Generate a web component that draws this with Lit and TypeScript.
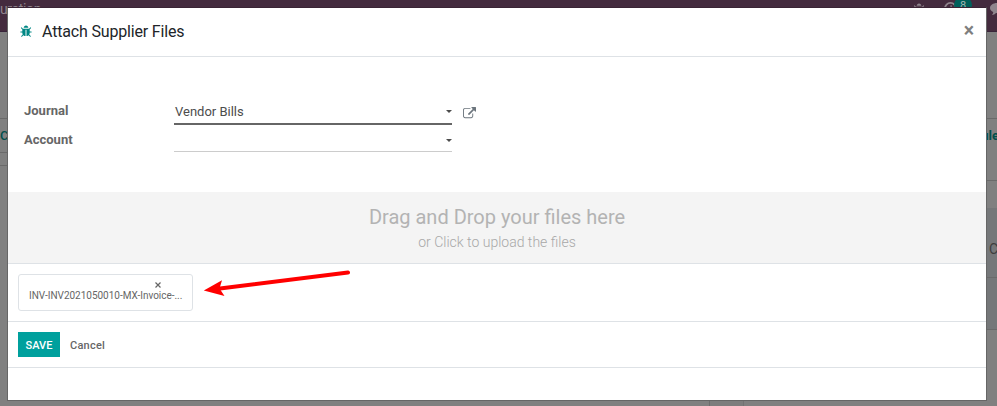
import { LitElement, html, css, svg } from "lit";
import { customElement, property } from "lit/decorators.js";

const BUG = "M1632 960q0 26-19 45t-45 19h-224q0 171-67 290l208 209q19 19 19 45t-19 45q-18 19-45 19t-45-19l-198-197q-5 5-15 13t-42 28.5-65 36.5-82 29-97 13v-896h-128v896q-51 0-101.5-13.5t-87-33-66-39-43.5-32.5l-15-14-183 207q-20 21-48 21-24 0-43-16-19-18-20.5-44.5t15.5-46.5l202-227q-58-114-58-274h-224q-26 0-45-19t-19-45 19-45 45-19h224v-294l-173-173q-19-19-19-45t19-45 45-19 45 19l173 173h844l173-173q19-19 45-19t45 19 19 45-19 45l-173 173v294h224q26 0 45 19t19 45zm-480-576h-640q0-133 93.5-226.5t226.5-93.5 226.5 93.5 93.5 226.5z";
const EXTERNAL = "M1408 928v320q0 119-84.5 203.5t-203.5 84.5h-832q-119 0-203.5-84.5t-84.5-203.5v-832q0-119 84.5-203.5t203.5-84.5h704q14 0 23 9t9 23v64q0 14-9 23t-23 9h-704q-66 0-113 47t-47 113v832q0 66 47 113t113 47h832q66 0 113-47t47-113v-320q0-14 9-23t23-9h64q14 0 23 9t9 23zm384-864v512q0 26-19 45t-45 19-45-19l-176-176-652 652q-10 10-23 10t-23-10l-114-114q-10-10-10-23t10-23l652-652-176-176q-19-19-19-45t19-45 45-19h512q26 0 45 19t19 45z";

const glyph = (path: string, box: string) =>
  html`<svg class="glyph" viewBox=${box}>${svg`<path d=${path} />`}</svg>`;

/** The page that stays dimmed under the dialog. */
@customElement("page-behind")
class PageBehind extends LitElement {
  static styles = css`
    :host { display: flex; flex-direction: column; height: 100%; background: #808080; font-size: 13px; }
    * { box-sizing: border-box; }
    .nav { height: 32px; flex: none; display: flex; align-items: flex-start; background: #442b3e; color: #8f858d; border-bottom: 1px solid #39243a; }
    .menu { margin: 1px 0 0; font-size: 14px; line-height: 16px; letter-spacing: -0.35px; }
    .tray { margin-left: auto; display: flex; align-items: flex-start; height: 31px; width: 84px; }
    .tray svg { flex: none; fill: #8f858d; }
    .bug { width: 12px; height: 13px; margin-top: 3px; }
    .clock { width: 13px; height: 13px; margin: 2px 0 0 19px; }
    .count { flex: none; width: 18px; height: 16px; margin: -3px 0 0 -3px; border-radius: 8px; background: #00605b; color: #a5b5b4; font-size: 11px; line-height: 18px; text-align: center; }
    .chat { width: 16px; height: 14px; margin: 2px 0 0 18px; }
    .control { height: 87px; flex: none; border-bottom: 1px solid #6a6a6a; }
    .body { flex: 1; display: flex; }
    .main { flex: none; width: 710px; border-right: 1px solid #6d6d6d; }
    .side { flex: 1; min-width: 0; display: flex; flex-direction: column; }
    .row { border-bottom: 1px solid #6a6a6a; }
    .status { height: 34px; padding-top: 9px; line-height: 16px; color: #004f4c; font-weight: 500; }
    .strip { height: 13px; }
    .schedule { height: 62px; padding-top: 9px; line-height: 16px; color: #004f4c; font-weight: 700; text-align: right; }
    .schedule span { margin-right: -2px; }
    .space { height: 27px; }
    .cell { background: #757779; color: #3d3d3d; }
    .first { height: 70px; padding: 33px 0 0 279px; line-height: 16px; font-size: 14px; }
    .second { height: 52px; }
    .foot { flex: 1; width: 34px; border-right: 1px solid #737373; background: #7d7d7d; }
  `;
  render() {
    return html`
      <div class="nav">
        <span class="menu">uration</span>
        <div class="tray">
          <svg class="bug" viewBox="0 0 1664 1792"><path d=${BUG} /></svg>
          <svg class="clock" viewBox="0 0 14 14"><path d="M7 0a7 7 0 1 0 0 14A7 7 0 0 0 7 0zm0 2a5 5 0 1 1 0 10A5 5 0 0 1 7 2zm0 1.5h1.3V8H5V6.8h2z" /></svg>
          <span class="count">8</span>
          <svg class="chat" viewBox="0 0 16 14"><path d="M7 1c4 0 7 2.200 7 5s-3 5-7 5H6c-1 1-2.500 2-4 2 1-1 1.300-2 1.200-3C1.200 9 0 7.600 0 6c0-2.800 3-5 7-5z" /></svg>
        </div>
      </div>
      <div class="control"></div>
      <div class="body">
        <div class="main">
          <div class="row status">C</div>
          <div class="row strip"></div>
        </div>
        <div class="side">
          <div class="row schedule"><span>ule</span></div>
          <div class="space"></div>
          <div class="row cell first">C</div>
          <div class="row cell second"></div>
          <div class="foot"></div>
        </div>
      </div>`;
  }
}

/** Labelled drop-down of the form. */
@customElement("select-field")
class SelectField extends LitElement {
  @property() label = "";
  @property() value = "";
  @property({ type: Boolean }) active = false;
  @property({ type: Boolean }) link = false;
  static styles = css`
    :host { display: flex; align-items: flex-start; height: 29px; font-size: 13px; line-height: 20px; }
    .label { width: 150px; font-weight: 700; color: #666; }
    .input { box-sizing: border-box; width: 278px; height: 22px; display: flex; align-items: center; padding: 0 0 1px 1px; color: #4c4c4c; border-bottom: 1px solid #ccc; }
    .input.active { height: 24px; border-bottom: 2px solid #666; }
    .arrow { margin-left: auto; border: 3px solid transparent; border-top-color: #4c4c4c; border-bottom: 0; }
    .glyph { width: 13px; height: 13px; margin: 6px 0 0 11px; fill: #6c757d; }
  `;
  render() {
    return html`
      <span class="label">${this.label}</span>
      <div class="input ${this.active ? "active" : ""}">${this.value}<i class="arrow"></i></div>
      ${this.link ? glyph(EXTERNAL, "0 0 1792 1792") : ""}`;
  }
}

@customElement("app-root")
class AppRoot extends LitElement {
  static styles = css`
    :host { display: block; position: relative; width: 997px; height: 406px; overflow: hidden; font-family: Roboto, sans-serif; color: #666; }
    * { box-sizing: border-box; }
    .dialog { position: absolute; inset: 7px 10px 5px 7px; display: flex; flex-direction: column; background: #fff; border: 1px solid #666; border-top-color: #3a2435; }
    .header { height: 49px; flex: none; display: flex; align-items: center; padding: 0 12px 1px 12px; border-bottom: 1px solid #dee2e6; }
    .header .glyph { width: 12px; height: 13px; fill: #008784; margin-right: 10px; }
    .title { font-size: 16px; line-height: 24px; letter-spacing: -0.17px; color: #212529; }
    .close { margin-left: auto; font-size: 19.5px; line-height: 20px; font-weight: 700; color: #7f7f7f; padding-bottom: 1px; }
    .form { height: 135px; flex: none; padding: 44px 16px 0; }
    .drop { height: 72px; flex: none; text-align: center; background: #f4f4f4; border-bottom: 1px solid #dee2e6; padding-top: 10px; color: #b3b3b3; }
    .big { font-size: 20px; line-height: 30px; }
    .small { font-size: 14px; line-height: 20px; font-weight: 300; color: #a8a8a8; }
    .files { height: 58px; flex: none; display: flex; gap: 10px; padding: 10px; border-bottom: 1px solid #dee2e6; }
    .file { width: 175px; height: 37px; border: 1px solid #dee2e6; border-radius: 3px; padding: 5px 10px 0; }
    .remove { display: block; width: 8px; height: 10px; margin-left: 125px; padding: 2px 1px; }
    .remove svg { display: block; width: 6px; height: 6px; stroke: #666; stroke-width: 1.2; }
    .name { font-size: 10px; line-height: 11px; letter-spacing: -0.02px; white-space: nowrap; }
    .pointer { flex: none; width: 148px; height: 30px; margin-top: -5px; overflow: visible; }
    .actions { height: 46px; flex: none; display: flex; align-items: center; gap: 10px; padding: 0 10px; border-bottom: 1px solid #dee2e6; font-size: 11px; font-weight: 500; }
    .save { width: 42px; height: 25px; line-height: 27px; text-align: center; letter-spacing: 0.1px; color: #fff; background: #00a09d; }
    .cancel { height: 25px; line-height: 27px; letter-spacing: 0.25px; }
  `;
  render() {
    return html`
      <page-behind></page-behind>
      <div class="dialog">
        <div class="header">
          ${glyph(BUG, "0 0 1664 1792")}
          <span class="title">Attach Supplier Files</span>
          <span class="close">×</span>
        </div>
        <div class="form">
          <select-field label="Journal" value="Vendor Bills" active link></select-field>
          <select-field label="Account"></select-field>
        </div>
        <div class="drop">
          <div class="big">Drag and Drop your files here</div>
          <div class="small">or Click to upload the files</div>
        </div>
        <div class="files">
          <div class="file">
            <span class="remove"><svg viewBox="0 0 6 6"><path d="M.5.5l5 5M5.500.5l-5 5" /></svg></span>
            <div class="name">INV-INV2021050010-MX-Invoice-...</div>
          </div>
          <svg class="pointer" viewBox="0 0 148 30">
            <path d="M15 19.700L145 3.500" stroke="#f00" stroke-width="4" stroke-linecap="round" />
            <path d="M.8 21.500L19 11.200L16.500 19.500L21.500 27z" fill="#f00" />
          </svg>
        </div>
        <div class="actions">
          <span class="save">SAVE</span>
          <span class="cancel">Cancel</span>
        </div>
      </div>`;
  }
}
